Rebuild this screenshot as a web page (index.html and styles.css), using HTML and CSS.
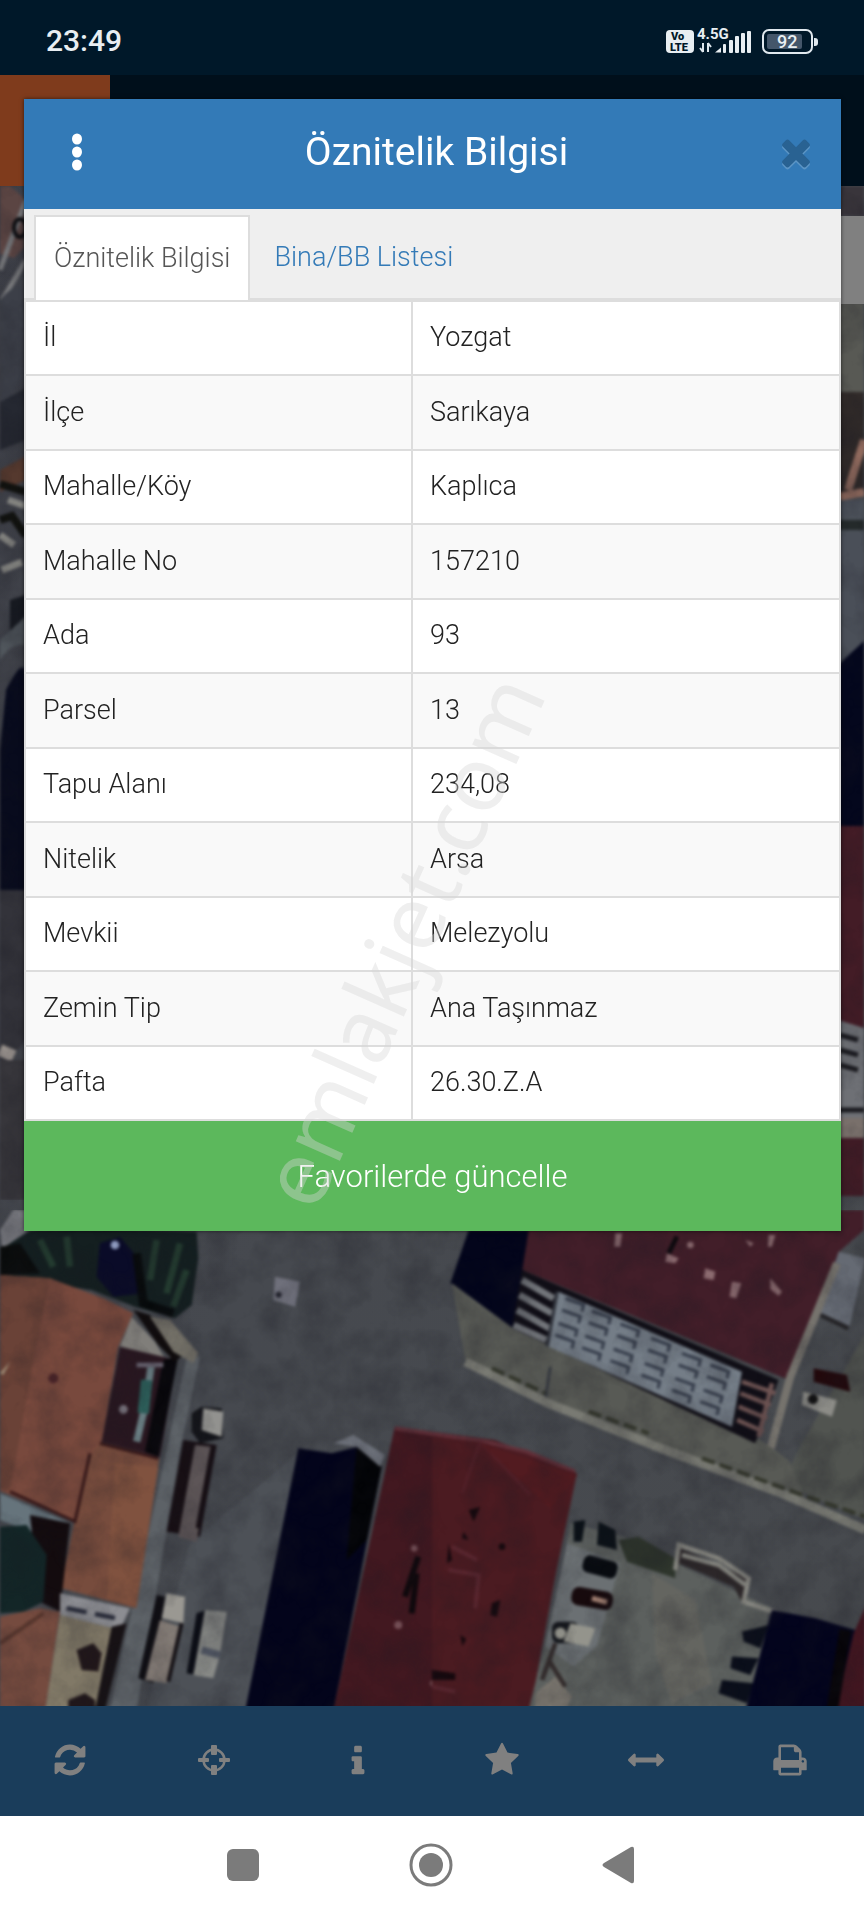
FILE: index.html
```html
<!DOCTYPE html>
<html lang="tr">
<head>
<meta charset="utf-8">
<meta name="viewport" content="width=device-width, initial-scale=1">
<title>Öznitelik Bilgisi</title>
<link rel="stylesheet" href="styles.css">
</head>
<body>
<div class="app">
  <div class="status">
    <time class="clock">23:49</time>
    <svg class="indicators" width="156" height="30" viewBox="0 0 156 30" aria-label="4.5G, 92">
      <rect x="2" y="4" width="28" height="23" rx="4" fill="#e8eef2"/>
      <text x="7" y="14" class="tiny">Vo</text>
      <text x="6" y="25" class="tiny">LTE</text>
      <text x="33" y="13" class="net">4.5G</text>
      <path d="M39 17v9M39 26l-3-4M44 26v-9M44 17l3 4" stroke="#dfe8ee" stroke-width="2" fill="none"/>
      <g fill="#e8eef2"><path d="M51 26.500l6-5v5z"/><rect x="59" y="18" width="3" height="9" rx="1"/><rect x="65" y="14" width="4" height="13" rx="1"/><rect x="71" y="10" width="4" height="17" rx="1"/><rect x="83" y="5" width="4" height="22" rx="1"/><rect x="77" y="7" width="4" height="20" rx="1"/></g>
      <rect x="99" y="4" width="49" height="23" rx="6" fill="none" stroke="#e0e8ee" stroke-width="2"/>
      <rect x="103" y="8" width="35" height="15" rx="2" fill="#44566a"/>
      <path d="M150 12h1a3 3 0 0 1 3 3v2a3 3 0 0 1-3 3h-1z" fill="#e0e8ee"/>
      <text x="113" y="22" class="level">92</text>
    </svg>
  </div>
  <div class="appbar"><div class="logo"></div></div>

  <div class="map">
    <svg class="aerial" viewBox="0 186 864 1520" preserveAspectRatio="xMidYMax slice" aria-hidden="true">
      <defs>
        <filter id="soft" x="0" y="0" width="100%" height="100%" color-interpolation-filters="sRGB"><feGaussianBlur stdDeviation="1.600"/></filter>
        <filter id="grain" x="0" y="0" width="100%" height="100%" color-interpolation-filters="sRGB">
          <feTurbulence type="fractalNoise" baseFrequency=".03" numOctaves="4" seed="4"/>
          <feColorMatrix values="0 0 0 0 .1  0 0 0 0 .1  0 0 0 0 .13  1.500 0 0 0 -.55"/>
        </filter>
        <linearGradient id="road" x1="0" y1="0" x2="1" y2="1"><stop offset="0" stop-color="#3d3f47"/><stop offset=".5" stop-color="#46494f"/><stop offset="1" stop-color="#474a4e"/></linearGradient>
      </defs>
      <rect y="186" width="864" height="1520" fill="url(#road)"/>
      <g filter="url(#soft)">
        <!-- left edge -->
        <path d="M0 186h10l14 12v50l-10 10-14-4z" fill="#5b4543"/>
        <path d="M0 270l26-70M2 300l24-40" stroke="#76777a" stroke-width="5"/>
        <ellipse cx="20" cy="228" rx="6" ry="9" fill="none" stroke="#0c0d10" stroke-width="4"/>
        <path d="M0 300q16-20 26-10v80L0 420z" fill="#3c3f48"/>
        <path d="M0 402l26-14v52l-26 10z" fill="#252831"/>
        <path d="M0 470l26-14v24l-26 12z" fill="#55392e"/>
        <path d="M0 484l26 8M0 520l12-4 14 20" stroke="#11120f" stroke-width="8" fill="none"/>
        <path d="M8 500l18 6M0 535l14 10M2 570l20-8" stroke="#898985" stroke-width="7"/>
        <path d="M10 600l16-5v30l-16 6z" fill="#161920"/>
        <path d="M0 660q14-20 26-14v-30L0 640z" fill="#50565c"/>
        <path d="M6 690q20-40 20-10v240H0V750z" fill="#080b1d"/>
        <path d="M0 890h26v150L0 1070z" fill="#33333a"/>
        <path d="M0 1050l14 6M12 1085l14 4" stroke="#9c9590" stroke-width="12"/>
        <path d="M0 1060h26v140H0z" fill="#37363b"/>
        <!-- right edge -->
        <path d="M838 186h26v30h-26z" fill="#39353b"/>
        <path d="M838 302h26v90h-26z" fill="#585954"/>
        <path d="M838 392h26v100h-26z" fill="#302a29"/>
        <path d="M838 497l26-5M864 440l-16 50" stroke="#936c5f" stroke-width="8"/>
        <path d="M838 500h26v150l-26 20z" fill="#4a4f58"/>
        <path d="M838 525h26" stroke="#242a2a" stroke-width="10"/>
        <path d="M838 665l26-24v190h-26z" fill="#04071d"/>
        <path d="M838 826h26v370h-26z" fill="#431c26"/>
        <path d="M838 1020l26 8v90h-26z" fill="#6e7075"/>
        <path d="M840 1035l18 5M840 1050l18 5M840 1065l18 5M838 1110h26" stroke="#1b1b20" stroke-width="5"/>
        <path d="M838 1118h26v20h-26z" fill="#79706b"/>
      </g>
      <g filter="url(#soft)">
      <g transform="translate(0 1210) scale(.3333)">
        <path d="M570 1000L440 1500h300l130-640 60-160z" fill="#4d5157"/>
        <path d="M500 720l60-280h40l-60 280-130 780h-80z" fill="#5d6267"/>
        <path d="M0 60l40-60h50l20 70-100 60z" fill="#74757b"/>
        <path d="M0 120l90-60 200-5 300 10 5 80-20 140-50 40-120-35-130-50L0 200z" fill="#141f20"/>
        <path d="M0 110l60-10 60 90-120 5z" fill="#0a0c0c"/>
        <path d="M300 100l60-20 50 60 20 110-90 10-50-60z" fill="#0a0b28"/>
        <path d="M120 90l40 80M200 80l10 90M470 90l-20 120M540 100l-40 150M560 180l-40 110" stroke="#233a2f" stroke-width="20"/>
        <path d="M410 130l20 150 90 30" stroke="#070a0b" stroke-width="26" fill="none"/>
        <circle cx="345" cy="105" r="13" fill="#8f9bc0"/>
        <path d="M0 195l150 10 160 60 90 45-45 100-50 290-35 40-45 195L0 842z" fill="#78493d"/>
        <path d="M0 195l150 10-55 280-65 357-30-5z" fill="#6a4237"/>
        <path d="M0 490l30-35-20 40z" fill="#a29078"/>
        <circle cx="160" cy="505" r="15" fill="#4b2428"/>
        <path d="M395 320l70 75 35 60-140-45z" fill="#807e7a"/>
        <path d="M360 410l170 40-50 290-175-45z" fill="#291720"/>
        <path d="M490 450l45-10-60 300-40-15z" fill="#08070b"/>
        <path d="M400 300l50 15 100 120-25 20-50-50z" fill="#100c0d"/>
        <path d="M450 320l60 10 85 100-15 30-60-35z" fill="#747168"/>
        <path d="M455 460l-20 130-25 105" stroke="#697d82" stroke-width="22" fill="none"/>
        <path d="M440 510l-10 100" stroke="#2c5c58" stroke-width="34"/>
        <path d="M410 465h80" stroke="#696471" stroke-width="14"/>
        <circle cx="370" cy="598" r="13" fill="#76717a"/>
        <path d="M300 700l178 45-70 450-225-60 40-200 45-195z" fill="#774c3d"/>
        <path d="M345 760l130 10-65 420-90-25z" fill="#80523f"/>
        <path d="M300 700l175 45M270 730l-45 205L30 845" stroke="#351718" stroke-width="9" fill="none"/>
        <path d="M0 850l210 90-50 50L0 930z" fill="#66747c"/>
        <path d="M90 915l120 25-30 265-60-30z" fill="#130b0e"/>
        <path d="M0 950l80-5 60 90-10 140-60 30-70 5z" fill="#132627"/>
        <path d="M0 1220l120-25 60 10-45 300H0z" fill="#754b3f"/>
        <path d="M0 1300l130-90" stroke="#57362d" stroke-width="12"/>
        <path d="M180 1150l210 45-30 65-180-45z" fill="#8c8d92"/>
        <path d="M200 1195l60 12M285 1212l60 12" stroke="#2a2d3b" stroke-width="14"/>
        <path d="M180 1215l160 40-45 250H135z" fill="#817967"/>
        <path d="M335 1250l45-10-65 260h-30z" fill="#171215"/>
        <path d="M230 1320l50-20 25 30-10 55-50-5zM205 1470l50-20 30 20v30h-80z" fill="#21171a"/>
        <path d="M825 200l75 15-15 75-65-20z" fill="#6f707b"/>
        <circle cx="836" cy="254" r="9" fill="#22232c"/>
        <path d="M575 610l30-20 60 5 5 90-70 15-25-35z" fill="#14151a"/>
        <path d="M610 595l60 10-5 75-60-20z" fill="#92928f"/>
        <path d="M550 690l100 15-50 275-100-15z" fill="#170f14"/>
        <path d="M585 705l50 5-45 285-55-15z" fill="#5d5557"/>
        <path d="M640 710l-45 245" stroke="#170f14" stroke-width="16"/>
        <path d="M470 1155l25 5-35 260-45-15z" fill="#0f0e13"/>
        <path d="M500 1150l55 10-5 80-65-15z" fill="#9a9892"/>
        <path d="M480 1230l60 20-40 170-65-10z" fill="#847c76"/>
        <path d="M545 1240l-40 175" stroke="#171317" stroke-width="12"/>
        <path d="M590 1210l30-10-30 195-30-5z" fill="#0b0d15"/>
        <path d="M615 1200l65 5-20 130-20 70-60-10z" fill="#888a87"/>
        <path d="M605 1320l55 15" stroke="#525865" stroke-width="22"/>
        <path d="M895 715l100 15 80-20 70 60-145 735H735z" fill="#03041b"/>
        <path d="M1070 710l75 60-45 220-60 60z" fill="#030407"/>
        <path d="M1000 700l60-25 95 60-15 35-70-60z" fill="#6b6f78"/>
        <path d="M1185 650l300 40 245 100-105 500-30 215h-595z" fill="#4b1b22"/>
        <path d="M1185 650l270 45-130 810h-325z" fill="#421820"/>
        <path d="M1185 655l270 40 125 30 145 60" stroke="#613039" stroke-width="12" fill="none"/>
        <path d="M1255 1040l-40 120M1250 1090l-15 120" stroke="#0f080c" stroke-width="18"/>
        <g fill="#765057"><circle cx="1243" cy="1015" r="10"/><circle cx="1195" cy="1245" r="12"/><circle cx="1300" cy="1420" r="10"/></g>
      </g>
      <g transform="translate(432 1210) scale(.3333)">
        <path d="M1110 700l190-330v560l-250-110z" fill="#515450"/>
        <path d="M110 60h190l-50 300-195-140z" fill="#03051b"/>
        <path d="M300 0h996v60l-75 65-150 385-800-330z" fill="#421e29"/>
        <path d="M1220 125l80 20-50 215-90-40z" fill="#656a73"/>
        <path d="M1165 315l85 40" stroke="#252427" stroke-width="14"/>
        <path d="M1215 160L1075 500l-60 220" stroke="#76736d" stroke-width="24" fill="none"/>
        <path d="M60 220l190 140 720 320 100 70 50 120L350 570 100 450z" fill="#585a55"/>
        <path d="M270 180l770 330-70 190-730-345z" fill="#100e16"/>
        <path d="M380 245l550 240-30 165-550-240z" fill="#747d87"/>
        <path d="M270 210l95 55M262 255l98 55M255 300l98 55M245 345l98 45" stroke="#72757a" stroke-width="20"/>
        <path d="M930 515l100 35M925 550l90 35M920 590l85 35M915 630l80 35M1020 520l-40 160" stroke="#6d5352" stroke-width="14"/>
        <g fill="none" stroke="#343b49" stroke-width="9">
          <path id="vents" d="M400 265l55 20-5 20M390 300l55 20-5 20M380 340l55 20-5 20M370 375l55 20-5 20"/>
          <use href="#vents" x="80" y="38"/><use href="#vents" x="165" y="77"/><use href="#vents" x="258" y="120"/><use href="#vents" x="350" y="165"/><use href="#vents" x="435" y="200"/>
        </g>
        <path d="M375 245l-30 165M355 470l-15 100" stroke="#343840" stroke-width="8"/>
        <path d="M100 455l250 125 350 140 350 130 250 110" stroke="#797a73" stroke-width="27" fill="none"/>
        <path d="M180 475l160 75M470 605l180 65M810 745l300 110 190 65" stroke="#34372c" stroke-width="12" fill="none" stroke-dasharray="40 16"/>
        <g fill="#8c6b70"><path d="M550 70h20l-5 40h-18zM705 130l35 15-10 15-30-5zM820 175l30 10-5 25-30-5zM900 215l28 5-15 45-20-5zM1015 205l35 40-10 12-25-20zM940 90l25 10-10 10zM1010 75h20l-10 35h-12z"/><circle cx="775" cy="105" r="10"/></g>
        <path d="M735 80l-25 50" stroke="#0c090d" stroke-width="14"/>
        <path d="M1145 475l100 20 10 50-110-30z" fill="#23080b"/>
        <path d="M1115 545l100 25-15 50-90-35z" fill="#8c8c87"/><circle cx="1143" cy="568" r="15" fill="#111"/>
        <path d="M0 680l145 15 290 95-60 280-80 430H0z" fill="#4b1b21"/>
        <path d="M145 695L90 850M145 695l150 160" stroke="#542129" stroke-width="8"/>
        <path d="M145 700l290 95-80 100z" fill="#521b20"/>
        <g fill="#16090e"><path d="M110 900l35-10-20 45zM95 965l15 25-20-5zM180 1180l25-10-10 50-20-5zM50 1000l10 50-15 10zM85 1275l18 12-12 22zM0 1380l70 10v20H0z"/><circle cx="210" cy="1010" r="10"/></g>
        <path d="M60 1010l75 40M50 1080l90 15-10 100M0 1430l70 15" stroke="#5c2730" stroke-width="12" fill="none"/>
        <path d="M415 940l160 40 180 90 190 90 70 30-70 310H290l95-390z" fill="#5c605e"/>
        <path d="M405 1000l160 60-70 250-70 60-85-60z" fill="#6b7073"/>
        <path d="M660 1090l130 80 50 250-120 60-50-150z" fill="#646560"/>
        <path d="M425 935l35-5-10 65h-25zM500 935l50 25 5 60-60-15z" fill="#0b1117"/>
        <path d="M560 990l60-10 110 65v60l-145-50z" fill="#2e352c"/>
        <path d="M735 1010l215 95-15 80-30-55-165-70v45z" fill="#2c2729"/>
        <path d="M730 1080l10-75 120 40 90 60-15 70 120 40M750 1035l110 30 80 60" fill="none" stroke="#85857f" stroke-width="14"/>
        <rect x="452" y="1045" width="105" height="52" rx="18" transform="rotate(15 505 1070)" fill="#080b10"/>
        <rect x="418" y="1138" width="125" height="55" rx="22" transform="rotate(10 480 1165)" fill="#170a0d"/><path d="M480 1165l45 12" stroke="#a28072" stroke-width="16"/>
        <rect x="360" y="1235" width="80" height="65" rx="20" fill="#15171c"/>
        <path d="M415 1240l75 15-20 55-75-15z" fill="#94948c"/><circle cx="385" cy="1270" r="17" fill="#94948c"/>
        <path d="M930 1265l80-20-25 70-50-20zM900 1340l80 5-25 50-60-20zM870 1410l95 10-20 60-85-30z" fill="#0a0e1a"/>
        <path d="M1020 1200l130 25 120 35-60 245H940z" fill="#03041d"/>
        <path d="M1265 1270l35-80v315h-90z" fill="#421620"/>
        <path d="M1240 1260l-40 245" stroke="#070509" stroke-width="35"/>
        <path d="M310 1450l60-50 50 60-20 40h-90z" fill="#77736c"/><path d="M350 1350l50 80M370 1300l-40 110" stroke="#332c2c" stroke-width="14"/>
      </g>
      </g>
      <rect y="186" width="864" height="1520" filter="url(#grain)" opacity=".350"/>
    </svg>
    <div class="map-panel"></div>
  </div>

  <nav class="toolbar" aria-label="Harita araçları">
    <button type="button" aria-label="Yenile"><svg viewBox="-128 0 1792 1792"><path d="M1511 1056q0 5-1 7-64 268-268 434.500t-478 166.500q-146 0-282.500-55t-243.500-157l-129 129q-19 19-45 19t-45-19-19-45v-448q0-26 19-45t45-19h448q26 0 45 19t19 45-19 45l-137 137q71 66 161 102t187 36q134 0 250-65t186-179q11-17 53-117 8-23 30-23h192q13 0 22.500 9.500t9.500 22.500zm25-800v448q0 26-19 45t-45 19h-448q-26 0-45-19t-19-45 19-45l138-138q-148-137-349-137-134 0-250 65t-186 179q-11 17-53 117-8 23-30 23h-199q-13 0-22.500-9.500t-9.500-22.500v-7q65-268 270-434.500t480-166.500q146 0 284 55.500t245 156.500l130-129q19-19 45-19t45 19 19 45z"/></svg></button>
    <button type="button" aria-label="Konum"><svg viewBox="0 0 36 36"><circle cx="18" cy="18" r="10.500" fill="none" stroke="currentColor" stroke-width="2.500"/><path d="M16 3h4a1 1 0 0 1 1 1v8a1 1 0 0 1-1 1h-4a1 1 0 0 1-1-1V4a1 1 0 0 1 1-1zM16 23h4a1 1 0 0 1 1 1v8a1 1 0 0 1-1 1h-4a1 1 0 0 1-1-1v-8a1 1 0 0 1 1-1zM3 16h9a1 1 0 0 1 1 1v2a1 1 0 0 1-1 1H3a1 1 0 0 1-1-1v-2a1 1 0 0 1 1-1zM24 16h9a1 1 0 0 1 1 1v2a1 1 0 0 1-1 1h-9a1 1 0 0 1-1-1v-2a1 1 0 0 1 1-1z"/></svg></button>
    <button type="button" aria-label="Bilgi"><svg viewBox="0 -64 1792 1792"><path d="M1216 1344v128q0 26-19 45t-45 19h-512q-26 0-45-19t-19-45v-128q0-26 19-45t45-19h64v-384h-64q-26 0-45-19t-19-45v-128q0-26 19-45t45-19h384q26 0 45 19t19 45v576h64q26 0 45 19t19 45zm-128-1152v192q0 26-19 45t-45 19h-256q-26 0-45-19t-19-45v-192q0-26 19-45t45-19h256q26 0 45 19t19 45z"/></svg></button>
    <button type="button" aria-label="Favoriler"><svg viewBox="0 0 1792 1792"><path d="M1728 647q0 22-26 48l-363 354 86 500q1 7 1 20 0 21-10.500 35.500t-30.500 14.500q-19 0-40-12l-449-236-449 236q-22 12-40 12-21 0-31.500-14.500t-10.500-35.500q0-6 2-20l86-500-364-354q-25-27-25-48 0-37 56-46l502-73 225-455q19-41 49-41t49 41l225 455 502 73q56 9 56 46z"/></svg></button>
    <button type="button" aria-label="Ölçüm"><svg viewBox="0 0 1792 1792"><path d="M1792 896q0 26-19 45l-256 256q-19 19-45 19t-45-19-19-45v-128h-1024v128q0 26-19 45t-45 19-45-19l-256-256q-19-19-19-45t19-45l256-256q19-19 45-19t45 19 19 45v128h1024v-128q0-26 19-45t45-19 45 19l256 256q19 19 19 45z"/></svg></button>
    <button type="button" aria-label="Yazdır"><svg viewBox="0 0 1792 1792"><path d="M448 1536h896v-256h-896v256zm0-640h896v-384h-160q-40 0-68-28t-28-68v-160h-640v640zm1152 64q0-26-19-45t-45-19-45 19-19 45 19 45 45 19 45-19 19-45zm128 0v416q0 13-9.500 22.500t-22.500 9.500h-224v160q0 40-28 68t-68 28h-960q-40 0-68-28t-28-68v-160h-224q-13 0-22.500-9.500t-9.500-22.500v-416q0-79 56.500-135.500t135.500-56.500h64v-544q0-40 28-68t68-28h672q40 0 88 20t76 48l152 152q28 28 48 76t20 88v256h64q79 0 135.500 56.500t56.500 135.500z"/></svg></button>
  </nav>

  <nav class="system" aria-label="Sistem">
    <button type="button" aria-label="Son uygulamalar"><svg viewBox="0 0 44 44"><rect x="6" y="6" width="32" height="32" rx="6"/></svg></button>
    <button type="button" aria-label="Ana ekran"><svg viewBox="0 0 44 44"><circle cx="22" cy="22" r="20" fill="none" stroke="currentColor" stroke-width="3"/><circle cx="22" cy="22" r="12"/></svg></button>
    <button type="button" aria-label="Geri"><svg viewBox="0 0 44 44"><path d="M7 20L34 4q3-1 3 2v32q0 3-3 2L7 24q-3-2 0-4z"/></svg></button>
  </nav>

  <section class="dialog" role="dialog" aria-labelledby="dialog-title">
    <header class="dialog-head">
      <button type="button" class="head-button" aria-label="Menü"><svg width="12" height="38" viewBox="0 0 12 38" fill="#fff"><ellipse cx="6" cy="6" rx="5" ry="5.500"/><ellipse cx="6" cy="19" rx="5" ry="5.500"/><ellipse cx="6" cy="32" rx="5" ry="5.500"/></svg></button>
      <h1 id="dialog-title">Öznitelik Bilgisi</h1>
      <button type="button" class="head-button" aria-label="Kapat"><svg class="close" viewBox="0 0 1792 1792"><path d="M1490 1322q0 40-28 68l-136 136q-28 28-68 28t-68-28l-294-294-294 294q-28 28-68 28t-68-28l-136-136q-28-28-28-68t28-68l294-294-294-294q-28-28-28-68t28-68l136-136q28-28 68-28t68 28l294 294 294-294q28-28 68-28t68 28l136 136q28 28 28 68t-28 68l-294 294 294 294q28 28 28 68z"/></svg></button>
    </header>
    <div class="tabs" role="tablist">
      <button type="button" class="tab active" role="tab" aria-selected="true">Öznitelik Bilgisi</button>
      <button type="button" class="tab" role="tab" aria-selected="false">Bina/BB Listesi</button>
    </div>
    <table class="attributes">
      <tbody>
        <tr><th scope="row">İl</th><td>Yozgat</td></tr>
        <tr><th scope="row">İlçe</th><td>Sarıkaya</td></tr>
        <tr><th scope="row">Mahalle/Köy</th><td>Kaplıca</td></tr>
        <tr><th scope="row">Mahalle No</th><td>157210</td></tr>
        <tr><th scope="row">Ada</th><td>93</td></tr>
        <tr><th scope="row">Parsel</th><td>13</td></tr>
        <tr><th scope="row">Tapu Alanı</th><td>234,08</td></tr>
        <tr><th scope="row">Nitelik</th><td>Arsa</td></tr>
        <tr><th scope="row">Mevkii</th><td>Melezyolu</td></tr>
        <tr><th scope="row">Zemin Tip</th><td>Ana Taşınmaz</td></tr>
        <tr><th scope="row">Pafta</th><td>26.30.Z.A</td></tr>
      </tbody>
    </table>
    <button type="button" class="update">Favorilerde güncelle</button>
    <div class="watermark">emlakjet.com</div>
  </section>
</div>
</body>
</html>
```
FILE: styles.css
```css
* { box-sizing: border-box; }
body {
  margin: 0;
  font-family: Roboto, "Liberation Sans", sans-serif;
  font-size: 27px;
  font-weight: 300;
  color: #222;
}
button {
  margin: 0;
  padding: 0;
  border: 0;
  background: none;
  font: inherit;
  color: inherit;
}
svg { display: block; fill: currentColor; }

.app {
  position: relative;
  display: flex;
  flex-direction: column;
  min-height: 100vh;
}
.status {
  display: flex;
  align-items: center;
  justify-content: space-between;
  height: 75px;
  padding: 6px 44px 0 46px;
  background: #001829;
  color: #e8eef2;
}
.clock { font-size: 30px; font-weight: 500; }
.indicators text { font-weight: 700; fill: #e8eef2; }
.indicators .tiny { font-size: 11px; font-weight: 900; fill: #001829; }
.indicators .net { font-size: 15px; }
.indicators .level { font-size: 18px; font-weight: 500; }

.appbar { height: 111px; background: #000f1b; }
.logo { width: 110px; height: 100%; background: #7f3b1c; }

.map { position: relative; flex: 1; min-height: 1060px; overflow: hidden; }
.aerial { position: absolute; inset: 0; width: 100%; height: 100%; }
.map-panel {
  position: absolute;
  top: 30px;
  right: 0;
  width: 60px;
  height: 88px;
  background: #808080;
}

.toolbar {
  display: grid;
  grid-template-columns: repeat(6, 1fr);
  height: 110px;
  background: #1a3d5b;
  color: #808080;
}
.toolbar button { display: grid; place-items: center; padding: 0 4px 2px 0; }
.toolbar svg { width: 36px; height: 36px; }

.system {
  display: flex;
  align-items: center;
  justify-content: center;
  gap: 144px;
  height: 104px;
  padding: 0 2px 6px 0;
  background: #fff;
  color: #7b7b7b;
}
.system svg { width: 44px; height: 44px; }

.dialog {
  position: absolute;
  top: 99px;
  left: 24px;
  right: 23px;
  background: #fff;
  box-shadow: 0 0 4px rgba(0, 0, 0, .6);
}
.dialog-head {
  display: flex;
  align-items: center;
  justify-content: space-between;
  height: 110px;
  padding: 0 14px 4px 22px;
  background: #337ab7;
  color: #fff;
}
.dialog-head h1 { margin: 0; font-size: 39px; font-weight: 400; }
.head-button { display: grid; place-items: center; width: 62px; height: 100%; }
.close {
  width: 42px;
  height: 42px;
  color: #296292;
  filter: drop-shadow(0 2px 0 #5c95c5);
}

.tabs {
  display: flex;
  height: 93px;
  padding: 6px 10px 0;
  background: #efefef;
  border-bottom: 4px solid #ddd;
}
.tab {
  height: 85px;
  padding: 0 18px 2px;
  border: 2px solid transparent;
  color: #337ab7;
}
.tab.active {
  margin-right: 4px;
  background: #fff;
  border-color: #ddd;
  border-bottom: 0;
  color: #555;
}

.attributes {
  width: 100%;
  border-collapse: separate;
  border-spacing: 0;
  border: solid #ddd;
  border-width: 0 2px;
}
.attributes th,
.attributes td {
  height: 74px;
  padding: 0 17px 2px;
  border-bottom: 2px solid #ddd;
  font-weight: 300;
  text-align: left;
}
.attributes th { width: 387px; border-right: 2px solid #ddd; }
.attributes tr:nth-child(even) > * { height: 75px; background: #f9f9f9; }

.update {
  display: block;
  width: 100%;
  height: 110px;
  background: #5cb85c;
  color: #fff;
  font-size: 31px;
}
.watermark {
  position: absolute;
  left: 292px;
  top: 1035px;
  font: 400 90px/90px "Noto Sans", sans-serif;
  color: rgba(215, 215, 215, .4);
  white-space: nowrap;
  transform: rotate(-66deg);
  transform-origin: 0 80px;
  pointer-events: none;
}
```
